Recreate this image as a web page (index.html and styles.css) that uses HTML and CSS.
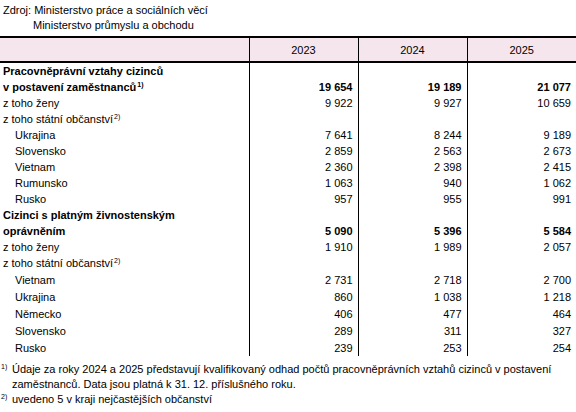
FILE: index.html
```html
<!DOCTYPE html>
<html lang="cs">
<head>
    <meta charset="UTF-8">
    <title>Cizinci na trhu práce</title>
    <link rel="stylesheet" href="styles.css">
</head>
<body>

<div class="source">
    <p>Zdroj: Ministerstvo práce a sociálních věcí</p>
    <p class="indent">Ministerstvo průmyslu a obchodu</p>
</div>

<table class="data">
    <colgroup>
        <col class="c-label">
        <col class="c-num">
        <col class="c-num">
        <col class="c-num">
    </colgroup>
    <thead>
        <tr>
            <th></th>
            <th>2023</th>
            <th>2024</th>
            <th>2025</th>
        </tr>
    </thead>
    <tbody>
        <tr class="total">
            <td class="label">Pracovněprávní vztahy cizinců<br>v postavení zaměstnanců<sup>1)</sup></td>
            <td>19 654</td>
            <td>19 189</td>
            <td>21 077</td>
        </tr>
        <tr>
            <td class="label">z toho ženy</td>
            <td>9 922</td>
            <td>9 927</td>
            <td>10 659</td>
        </tr>
        <tr>
            <td class="label">z toho státní občanství<sup>2)</sup></td>
            <td></td>
            <td></td>
            <td></td>
        </tr>
        <tr>
            <td class="label sub">Ukrajina</td>
            <td>7 641</td>
            <td>8 244</td>
            <td>9 189</td>
        </tr>
        <tr>
            <td class="label sub">Slovensko</td>
            <td>2 859</td>
            <td>2 563</td>
            <td>2 673</td>
        </tr>
        <tr>
            <td class="label sub">Vietnam</td>
            <td>2 360</td>
            <td>2 398</td>
            <td>2 415</td>
        </tr>
        <tr>
            <td class="label sub">Rumunsko</td>
            <td>1 063</td>
            <td>940</td>
            <td>1 062</td>
        </tr>
        <tr>
            <td class="label sub">Rusko</td>
            <td>957</td>
            <td>955</td>
            <td>991</td>
        </tr>
        <tr class="total">
            <td class="label">Cizinci s platným živnostenským<br>oprávněním</td>
            <td>5 090</td>
            <td>5 396</td>
            <td>5 584</td>
        </tr>
        <tr>
            <td class="label">z toho ženy</td>
            <td>1 910</td>
            <td>1 989</td>
            <td>2 057</td>
        </tr>
        <tr>
            <td class="label">z toho státní občanství<sup>2)</sup></td>
            <td></td>
            <td></td>
            <td></td>
        </tr>
        <tr class="tall">
            <td class="label sub">Vietnam</td>
            <td>2 731</td>
            <td>2 718</td>
            <td>2 700</td>
        </tr>
        <tr class="tall">
            <td class="label sub">Ukrajina</td>
            <td>860</td>
            <td>1 038</td>
            <td>1 218</td>
        </tr>
        <tr class="tall">
            <td class="label sub">Německo</td>
            <td>406</td>
            <td>477</td>
            <td>464</td>
        </tr>
        <tr class="tall">
            <td class="label sub">Slovensko</td>
            <td>289</td>
            <td>311</td>
            <td>327</td>
        </tr>
        <tr class="tall">
            <td class="label sub">Rusko</td>
            <td>239</td>
            <td>253</td>
            <td>254</td>
        </tr>
    </tbody>
</table>

<div class="notes">
    <div class="note">
        <span class="mark">1)</span>
        <p>Údaje za roky 2024 a 2025 představují kvalifikovaný odhad počtů pracovněprávních vztahů cizinců v postavení zaměstnanců. Data jsou platná k 31. 12. příslušného roku.</p>
    </div>
    <div class="note">
        <span class="mark">2)</span>
        <p>uvedeno 5 v kraji nejčastějších občanství</p>
    </div>
</div>

</body>
</html>
```

FILE: styles.css
```css
* {
    padding: 0;
    margin: 0;
}
body {
    width: 576px;
    font-family: "Liberation Sans", Arial, sans-serif;
    font-size: 11px;
    color: #000;
    background: #fff;
}
sup {
    font-size: 7px;
    line-height: 0;
    vertical-align: 4px;
    margin-left: 1px;
}
.source {
    padding: 3px 0 0 3px;
    height: 33px;
    line-height: 15px;
}
.source .indent {
    padding-left: 30px;
}
.data {
    width: 576px;
    border-collapse: collapse;
    table-layout: fixed;
}
.data .c-label {
    width: 249px;
}
.data .c-num {
    width: 109px;
}
.data thead th {
    height: 23px;
    padding: 0;
    font-weight: normal;
    text-align: center;
    background: #f5e6ee;
    border-top: 2px solid #000;
    border-bottom: 2px solid #000;
    border-left: 1px solid #000;
}
.data thead th:first-child {
    border-left: none;
}
.data td {
    height: 16px;
    line-height: 16px;
    padding: 0 5px 0 0;
    text-align: right;
    vertical-align: bottom;
    white-space: nowrap;
    border-left: 1px solid #000;
}
.data td.label {
    text-align: left;
    padding-left: 3px;
    border-left: none;
}
.data td.sub {
    padding-left: 15px;
}
.data tr.total td {
    font-weight: bold;
}
.data tr.tall td {
    height: 17px;
}
.notes {
    padding-top: 6px;
    line-height: 15px;
}
.note {
    display: flex;
}
.note .mark {
    width: 11px;
    flex-shrink: 0;
    font-size: 7px;
    line-height: 9px;
    padding-left: 1px;
}
.note p {
    flex: 1;
    padding-right: 20px;
}
```
